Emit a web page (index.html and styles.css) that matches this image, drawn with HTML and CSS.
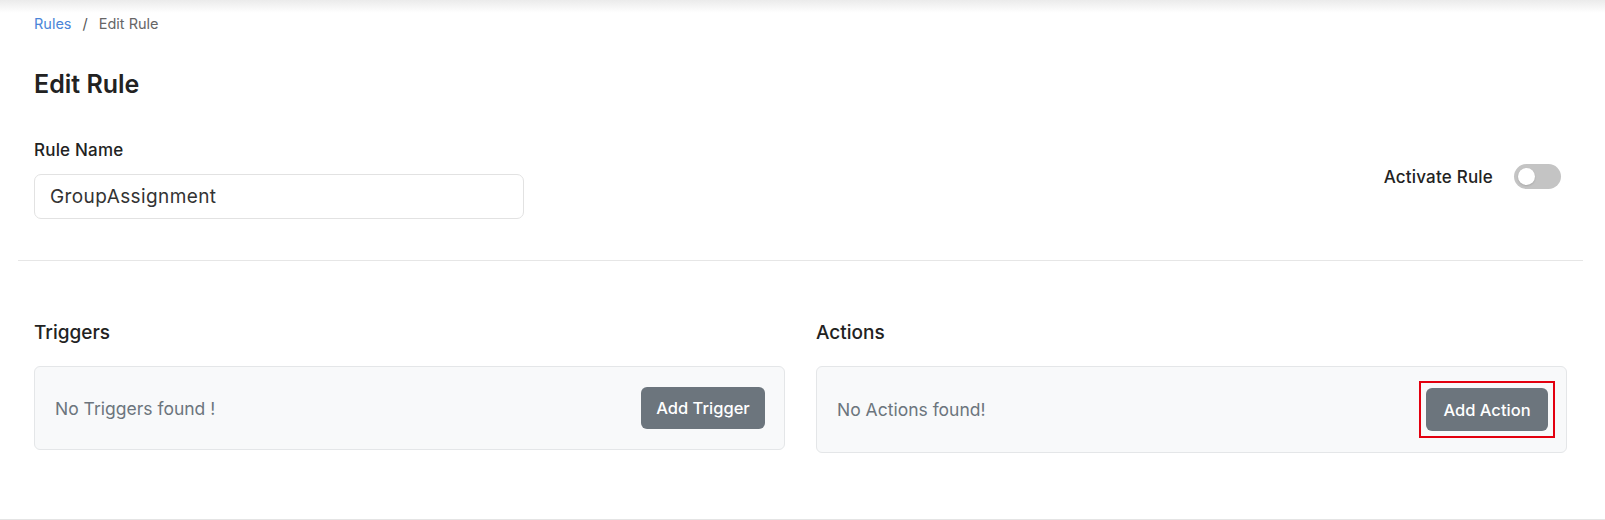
FILE: index.html
```html
<!DOCTYPE html>
<html>
<head>
<meta charset="utf-8">
<link rel="stylesheet" href="styles.css">
</head>
<body>
<div class="topshade"></div>
<main class="page">
  <nav class="crumbs">
    <a class="crumb-link">Rules</a>
    <span class="crumb-sep">/</span>
    <span class="crumb-current">Edit Rule</span>
  </nav>
  <h1 class="title">Edit Rule</h1>
  <section class="rule-row">
    <div class="field">
      <label class="field-label">Rule Name</label>
      <div class="input">GroupAssignment</div>
    </div>
    <div class="activate">
      <span class="activate-label">Activate Rule</span>
      <span class="toggle"><span class="knob"></span></span>
    </div>
  </section>
  <hr class="divider">
  <section class="panels">
    <div class="panel">
      <h2 class="panel-title">Triggers</h2>
      <div class="card">
        <span class="empty">No Triggers found !</span>
        <button class="btn">Add Trigger</button>
      </div>
    </div>
    <div class="panel">
      <h2 class="panel-title">Actions</h2>
      <div class="card card-actions">
        <span class="empty">No Actions found!</span>
        <span class="highlight"><button class="btn btn-action">Add Action</button></span>
      </div>
    </div>
  </section>
</main>
<div class="bottomline"></div>
</body>
</html>
```
FILE: styles.css
```css
* { box-sizing: border-box; }
html, body { margin: 0; padding: 0; background: #fff; }
body {
  font-family: "Inter", "Noto Sans", sans-serif;
  color: #212529;
  width: 1605px;
  height: 520px;
  overflow: hidden;
}
.topshade {
  height: 13px;
  background: linear-gradient(#ebebeb, #fdfdfd 90%, #fff);
  margin-bottom: -13px;
}
.page {
  padding: 12px 0 0 0;
  height: 519px;
}
.crumbs {
  padding-left: 34px;
  font-size: 14.5px;
  height: 22px;
  display: flex;
  align-items: center;
  position: relative;
}
.crumb-link { color: #4a85d8; }
.crumb-sep { color: #555; margin: 0 11px 0 11px; }
.crumb-current { color: #666; }
.title {
  margin: 35px 0 0 34px;
  font-size: 25px;
  font-weight: 600;
  line-height: 30px;
  color: #222;
}
.rule-row {
  display: flex;
  justify-content: space-between;
  padding: 0 44px 0 34px;
  margin-top: 41px;
}
.field { width: 490px; }
.field-label {
  display: block;
  font-size: 17px;
  font-weight: 500;
  line-height: 20px;
  color: #222;
  letter-spacing: 0.2px;
}
.input {
  margin-top: 14px;
  height: 45px;
  border: 1px solid #e2e2e2;
  border-radius: 7px;
  padding: 0 15px;
  display: flex;
  align-items: center;
  font-size: 19px;
  color: #333;
  letter-spacing: 0.4px;
}
.activate {
  display: flex;
  align-items: center;
  gap: 21px;
  margin-top: 24px;
  height: 25px;
}
.activate-label {
  font-size: 17px;
  font-weight: 500;
  color: #222;
  letter-spacing: 0.2px;
}
.toggle {
  width: 47px;
  height: 25px;
  border-radius: 13px;
  background: #c4c4c4;
  display: flex;
  align-items: center;
  padding-left: 4px;
}
.knob {
  width: 17px;
  height: 17px;
  border-radius: 50%;
  background: #fff;
  box-shadow: 0 1px 2px rgba(0,0,0,0.15);
}
.divider {
  margin: 41px 22px 0 18px;
  border: 0;
  border-top: 1px solid #e6e6e6;
  height: 0;
}
.panels {
  display: grid;
  grid-template-columns: 751px 751px;
  gap: 31px;
  padding-left: 34px;
  margin-top: 60px;
}
.panel-title {
  margin: 0;
  font-size: 19px;
  font-weight: 500;
  line-height: 24px;
  color: #222;
}
.card {
  margin-top: 21px;
  height: 84px;
  background: #f8f9fa;
  border: 1px solid #e4e6e8;
  border-radius: 6px;
  display: flex;
  align-items: center;
  justify-content: space-between;
  padding: 0 19px 0 20px;
}
.card-actions { height: 87px; padding-right: 11px; }
.empty {
  font-size: 17.5px;
  color: #6c757d;
}
.btn {
  font-family: inherit;
  font-size: 16.5px;
  font-weight: 500;
  color: #fff;
  background: #6c757d;
  border: 0;
  border-radius: 6px;
  height: 42px;
  width: 124px;
  padding: 0;
}
.btn-action { width: 122px; height: 43px; }
.highlight {
  display: flex;
  border: 2px solid #e3000f;
  padding: 5px;
}
.bottomline {
  border-top: 1px solid #e4e4e4;
  height: 1px;
}
```
